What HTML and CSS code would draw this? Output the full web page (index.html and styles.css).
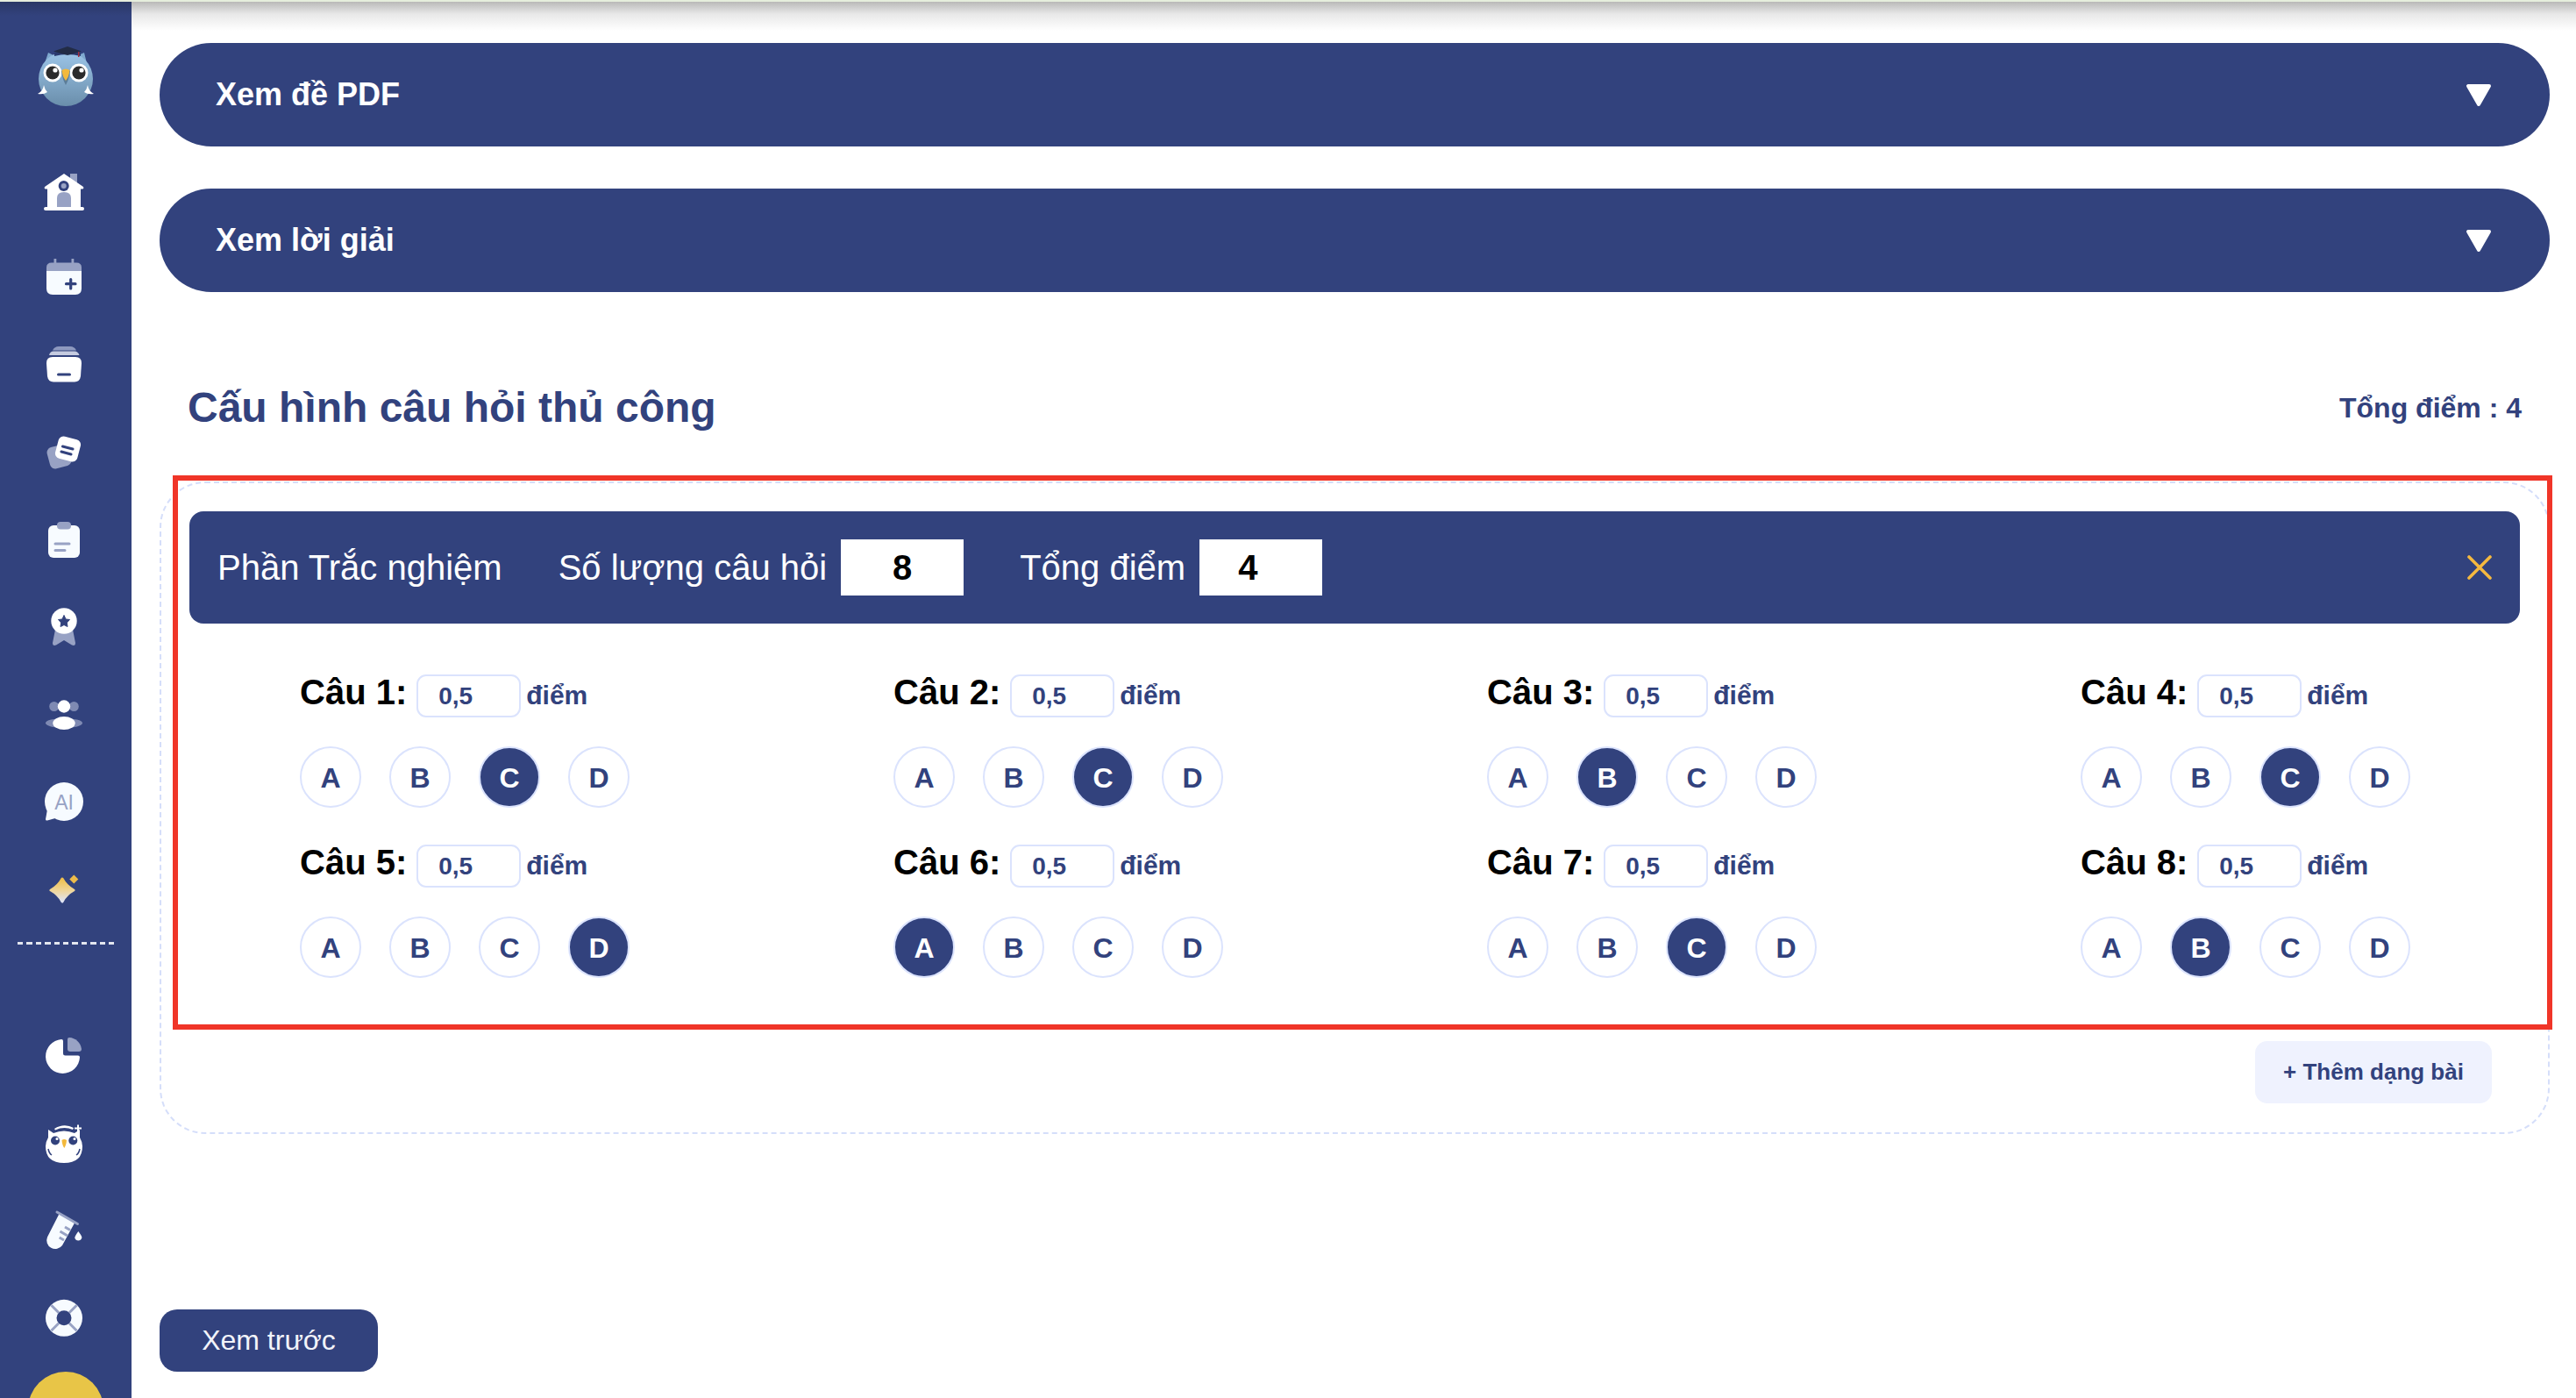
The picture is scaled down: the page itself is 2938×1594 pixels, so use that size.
FILE: index.html
```html
<!DOCTYPE html>
<html lang="vi">
<head>
    <meta charset="UTF-8">
    <title>Cấu hình câu hỏi thủ công</title>
    <link rel="stylesheet" href="styles.css">
</head>
<body>
    <div class="top-strip"></div>
    <div class="page">
        <aside class="sidebar">
            <svg class="logo" width="70" height="80" viewBox="0 0 70 80">
                <defs>
                    <linearGradient id="owlBody" x1="0" y1="0" x2="0" y2="1">
                        <stop offset="0" stop-color="#9cc5e8"/>
                        <stop offset="1" stop-color="#6a8eab"/>
                    </linearGradient>
                </defs>
                <path d="M11 22 L15 10 L23 14 Z M59 22 L56 10 L47 14 Z" fill="#7fa9cf"/>
                <circle cx="35" cy="40" r="31" fill="url(#owlBody)"/>
                <path d="M22 10 Q37 5 52 10 L52 14 Q37 10 22 14 Z" fill="#2a3a6e"/>
                <path d="M37 3 L53 8.500 L37 13 L21 8.500 Z" fill="#222c46"/>
                <rect x="49" y="9" width="1.500" height="6" fill="#a03040"/>
                <circle cx="20" cy="33" r="10.500" fill="#fff"/>
                <circle cx="50" cy="33" r="10.500" fill="#fff"/>
                <circle cx="20" cy="33" r="7.600" fill="#2b2b2b"/>
                <circle cx="50" cy="33" r="7.600" fill="#2b2b2b"/>
                <circle cx="23" cy="30" r="2.600" fill="#fff"/>
                <circle cx="53" cy="30" r="2.600" fill="#fff"/>
                <path d="M30 31 Q35 28 40 31 Q39 40 35 47 Q31 40 30 31 Z" fill="#5c7d98"/>
                <path d="M30.500 30 Q35 27 39.500 30 Q39 37 35 42 Q31 37 30.500 30 Z" fill="#f3b93c"/>
                <path d="M10 47 Q9 54 3 57 Q10 58 14 55 Q11 52 10 47 Z" fill="#fff"/>
                <path d="M60 47 Q61 54 67 57 Q60 58 56 55 Q59 52 60 47 Z" fill="#fff"/>
            </svg>

            <nav class="side-group first">
                <a class="side-item">
                    <svg width="50" height="50" viewBox="0 0 50 50">
                        <rect x="32" y="7" width="8" height="12" fill="#98a2c4"/>
                        <path d="M25 7 L47 22 Q48 24 46 24.500 L44 24.500 V45 H6 V24.500 H4 Q2 24 3 22 Z" fill="#fff"/>
                        <rect x="2" y="45" width="46" height="4" rx="2" fill="#fff"/>
                        <circle cx="24.700" cy="21" r="6" fill="#32427d"/>
                        <circle cx="24.700" cy="21" r="3" fill="#98a2c4"/>
                        <path d="M17 45 V35 Q17 28 25 28 Q33 28 33 35 V45 Z" fill="#98a2c4"/>
                    </svg>
                </a>
                <a class="side-item">
                    <svg width="50" height="50" viewBox="0 0 50 50">
                        <rect x="13.500" y="4" width="2.800" height="8" fill="#98a2c4"/>
                        <rect x="33.500" y="4" width="2.800" height="8" fill="#98a2c4"/>
                        <path d="M5 18 V14 Q5 8.500 11 8.500 H39 Q45 8.500 45 14 V18 Z" fill="#98a2c4"/>
                        <path d="M5 18 H45 V38 Q45 45 38 45 H12 Q5 45 5 38 Z" fill="#f7fbff"/>
                        <path d="M32.700 27.500 V38 M27.500 32.700 H38" stroke="#32427d" stroke-width="3.200" stroke-linecap="round"/>
                    </svg>
                </a>
                <a class="side-item">
                    <svg width="50" height="50" viewBox="0 0 50 50">
                        <path d="M12 8.500 Q14 4 19 4 H32 Q37 4 39 8.500 Z" fill="#8e99bf"/>
                        <path d="M8 14 Q9 9.500 13 9.500 H37 Q41 9.500 42.500 14 Z" fill="#c5cbe0"/>
                        <path d="M5 23 Q5 16 12 16 H38 Q45 16 45 23 L44 38 Q43 44.500 37 44.500 H13 Q7 44.500 6 38 Z" fill="#fff"/>
                        <rect x="17" y="34.500" width="16" height="3" rx="1.500" fill="#32427d"/>
                    </svg>
                </a>
                <a class="side-item">
                    <svg width="50" height="50" viewBox="0 0 50 50">
                        <rect x="7" y="17" width="25" height="25" rx="6" fill="#98a2c4" transform="rotate(-15 19.500 29.500)"/>
                        <rect x="16.500" y="8" width="26" height="26" rx="6" fill="#fff" transform="rotate(15 29.500 21)"/>
                        <path d="M23.500 18 L35 21 M22 24 L33 27" stroke="#32427d" stroke-width="3" stroke-linecap="round"/>
                    </svg>
                </a>
                <a class="side-item">
                    <svg width="50" height="50" viewBox="0 0 50 50">
                        <rect x="7" y="8" width="36" height="37" rx="6" fill="#f7fbff"/>
                        <rect x="17" y="4" width="16" height="8.500" rx="4" fill="#98a2c4"/>
                        <path d="M15 29 H31 M15 36.500 H26" stroke="#98a2c4" stroke-width="3" stroke-linecap="round"/>
                    </svg>
                </a>
                <a class="side-item">
                    <svg width="50" height="50" viewBox="0 0 50 50">
                        <path d="M15 27 L12 42 Q12 46 16 44.500 L25 39 L34 44.500 Q38 46 38 42 L35 27 Z" fill="#98a2c4"/>
                        <circle cx="25" cy="17" r="14.700" fill="#fff"/>
                        <path d="M25 10.500 L27 15 L31.500 15.500 L28.300 19 L29 23.500 L25 21.500 L21 23.500 L21.700 19 L18.500 15.500 L23 15 Z" fill="#32427d" stroke="#32427d" stroke-linejoin="round"/>
                    </svg>
                </a>
                <a class="side-item">
                    <svg width="50" height="50" viewBox="0 0 50 50">
                        <circle cx="13.700" cy="14.500" r="5.500" fill="#7f8ab3"/>
                        <circle cx="36.300" cy="14.500" r="5.500" fill="#7f8ab3"/>
                        <ellipse cx="25" cy="33.500" rx="21" ry="5.500" fill="#7f8ab3"/>
                        <circle cx="25" cy="14.500" r="7.200" fill="#fff"/>
                        <ellipse cx="25" cy="33.500" rx="12.700" ry="7.500" fill="#fff"/>
                    </svg>
                </a>
                <a class="side-item">
                    <svg width="50" height="50" viewBox="0 0 50 50">
                        <circle cx="25" cy="23" r="22" fill="#f7fbff"/>
                        <path d="M6 32 L4 43 Q4 45 6 44.500 L15 42 Z" fill="#f7fbff"/>
                        <text class="ai-text" x="25" y="31.500" text-anchor="middle">AI</text>
                    </svg>
                </a>
                <a class="side-item">
                    <svg width="50" height="50" viewBox="0 0 50 50">
                        <defs>
                            <linearGradient id="sparkFill" x1="0" y1="0" x2="0" y2="1">
                                <stop offset="0" stop-color="#efbf4c"/>
                                <stop offset="0.500" stop-color="#f0d596"/>
                                <stop offset="1" stop-color="#dfe4f6"/>
                            </linearGradient>
                        </defs>
                        <path d="M23 11 Q27.500 19.500 36 24 Q27.500 28.500 23 37 Q18.500 28.500 10 24 Q18.500 19.500 23 11 Z" fill="url(#sparkFill)" stroke="url(#sparkFill)" stroke-width="3" stroke-linejoin="round"/>
                        <path d="M36.300 6.500 L41.300 11.500 L36.300 16.500 L31.300 11.500 Z" fill="#edbb4a"/>
                    </svg>
                </a>
            </nav>

            <div class="side-divider"></div>

            <nav class="side-group">
                <a class="side-item">
                    <svg width="50" height="50" viewBox="0 0 50 50">
                        <path d="M24 8 V22 Q24 24.500 26.500 24.500 H41 Q43 24.500 43 26.500 A19.500 19.500 0 1 1 22 6 Q24 6 24 8 Z" fill="#fff"/>
                        <path d="M29 6 Q29 4 31 4 A15 15 0 0 1 45 17 Q45 20 42 20 H32 Q29 20 29 17 Z" fill="#98a2c4"/>
                    </svg>
                </a>
                <a class="side-item">
                    <svg width="50" height="50" viewBox="0 0 50 50">
                        <path d="M7 18 L7 9 L13 13 Q25 8 37 13 L43 9 L43 18 Q46 23 46 28 Q46 47 25 47 Q4 47 4 28 Q4 23 7 18 Z" fill="#fff"/>
                        <path d="M14 8 Q25 1 36 7 L35 9 Q25 5 15 9.500 Z" fill="#fff"/>
                        <circle cx="15" cy="21.500" r="5" fill="#32427d"/>
                        <circle cx="35.300" cy="21.500" r="5" fill="#32427d"/>
                        <circle cx="17" cy="19.500" r="1.500" fill="#fff"/>
                        <circle cx="37" cy="19.500" r="1.500" fill="#fff"/>
                        <path d="M22.500 21 Q25 19 28 21 Q27.500 27 25.300 30 Q23 27 22.500 21 Z" fill="#f3b93c"/>
                        <path d="M7 31 Q8 36 11 38 M43 31 Q42 36 39 38" stroke="#32427d" stroke-width="1.500" fill="none"/>
                        <path d="M41 3.500 V11.500 M37 7.500 H45" stroke="#fff" stroke-width="2"/>
                    </svg>
                </a>
                <a class="side-item">
                    <svg width="50" height="50" viewBox="0 0 50 50">
                        <path d="M19.500 5 L37 15.500 L23 41 A9.800 9.800 0 0 1 6 31.500 Z" fill="#f7fbff"/>
                        <path d="M17 3 L40.500 16.500" stroke="#98a2c4" stroke-width="3" stroke-linecap="round"/>
                        <path d="M26 20 L32 23.500 M20.500 25 L29 30 M19.700 32 L25 35" stroke="#98a2c4" stroke-width="3"/>
                        <path d="M41.300 25 Q46 31 45.300 32.500 A4.200 4.200 0 0 1 37.300 32.500 Q37 31 41.300 25 Z" fill="#f7fbff"/>
                    </svg>
                </a>
                <a class="side-item">
                    <svg width="50" height="50" viewBox="0 0 50 50">
                        <circle cx="25" cy="23.800" r="21" fill="#f7fbff"/>
                        <path d="M10.500 9.300 L19 17.800 M39.500 9.300 L31 17.800 M10.500 38.300 L19 29.800 M39.500 38.300 L31 29.800" stroke="#98a2c4" stroke-width="3"/>
                        <circle cx="25" cy="23.800" r="8.500" fill="#32427d"/>
                    </svg>
                </a>
            </nav>

            <div class="avatar"></div>
        </aside>

        <main class="content">
            <div class="collapse-bar">
                <span>Xem đề PDF</span>
                <svg width="30" height="27" viewBox="0 0 30 27"><path d="M3 3 H27 L15 24 Z" fill="#fff" stroke="#fff" stroke-width="4" stroke-linejoin="round"/></svg>
            </div>
            <div class="collapse-bar">
                <span>Xem lời giải</span>
                <svg width="30" height="27" viewBox="0 0 30 27"><path d="M3 3 H27 L15 24 Z" fill="#fff" stroke="#fff" stroke-width="4" stroke-linejoin="round"/></svg>
            </div>

            <div class="section-head">
                <h1>Cấu hình câu hỏi thủ công</h1>
                <span class="total">Tổng điểm : 4</span>
            </div>

            <section class="config-box">
                <div class="part-head">
                    <span class="part-title">Phần Trắc nghiệm</span>
                    <span class="part-label count-label">Số lượng câu hỏi</span>
                    <span class="part-field">8</span>
                    <span class="part-label score-label">Tổng điểm</span>
                    <span class="part-field score-field">4</span>
                    <svg class="part-close" width="28" height="28" viewBox="0 0 28 28"><path d="M2 2 L26 26 M26 2 L2 26" stroke="#f5b93f" stroke-width="3.600" stroke-linecap="round"/></svg>
                </div>

                <div class="question-grid">
                    <div class="question">
                        <div class="question-top"><span class="question-name">Câu 1:</span><span class="point-field">0,5</span><span class="point-unit">điểm</span></div>
                        <div class="options"><span class="option">A</span><span class="option">B</span><span class="option active">C</span><span class="option">D</span></div>
                    </div>
                    <div class="question">
                        <div class="question-top"><span class="question-name">Câu 2:</span><span class="point-field">0,5</span><span class="point-unit">điểm</span></div>
                        <div class="options"><span class="option">A</span><span class="option">B</span><span class="option active">C</span><span class="option">D</span></div>
                    </div>
                    <div class="question">
                        <div class="question-top"><span class="question-name">Câu 3:</span><span class="point-field">0,5</span><span class="point-unit">điểm</span></div>
                        <div class="options"><span class="option">A</span><span class="option active">B</span><span class="option">C</span><span class="option">D</span></div>
                    </div>
                    <div class="question">
                        <div class="question-top"><span class="question-name">Câu 4:</span><span class="point-field">0,5</span><span class="point-unit">điểm</span></div>
                        <div class="options"><span class="option">A</span><span class="option">B</span><span class="option active">C</span><span class="option">D</span></div>
                    </div>
                    <div class="question">
                        <div class="question-top"><span class="question-name">Câu 5:</span><span class="point-field">0,5</span><span class="point-unit">điểm</span></div>
                        <div class="options"><span class="option">A</span><span class="option">B</span><span class="option">C</span><span class="option active">D</span></div>
                    </div>
                    <div class="question">
                        <div class="question-top"><span class="question-name">Câu 6:</span><span class="point-field">0,5</span><span class="point-unit">điểm</span></div>
                        <div class="options"><span class="option active">A</span><span class="option">B</span><span class="option">C</span><span class="option">D</span></div>
                    </div>
                    <div class="question">
                        <div class="question-top"><span class="question-name">Câu 7:</span><span class="point-field">0,5</span><span class="point-unit">điểm</span></div>
                        <div class="options"><span class="option">A</span><span class="option">B</span><span class="option active">C</span><span class="option">D</span></div>
                    </div>
                    <div class="question">
                        <div class="question-top"><span class="question-name">Câu 8:</span><span class="point-field">0,5</span><span class="point-unit">điểm</span></div>
                        <div class="options"><span class="option">A</span><span class="option active">B</span><span class="option">C</span><span class="option">D</span></div>
                    </div>
                </div>

                <div class="box-actions">
                    <button class="add-btn">+ Thêm dạng bài</button>
                </div>
            </section>

            <button class="preview-btn">Xem trước</button>
        </main>
    </div>

    <div class="highlight-frame"></div>
</body>
</html>
```

FILE: styles.css
```css
* {
    box-sizing: border-box;
}
html, body {
    margin: 0;
    height: 100%;
}
body {
    font-family: 'Liberation Sans', Arial, sans-serif;
    background-color: #fff;
    color: #32427d;
    overflow: hidden;
    position: relative;
}
.top-strip {
    height: 2px;
    background-color: #e6eedd;
}
.page {
    display: flex;
    height: 1592px;
}

/* sidebar */
.sidebar {
    width: 150px;
    flex: none;
    display: flex;
    flex-direction: column;
    align-items: center;
    overflow: hidden;
    background: linear-gradient(#2a3866, #32427d 16px);
}
.logo {
    margin-top: 48px;
    flex: none;
}
.side-group {
    align-self: flex-start;
    width: 146px;
    margin-top: 77px;
    flex: none;
}
.side-group.first {
    margin-top: 36px;
}
.side-item {
    display: flex;
    height: 100px;
    align-items: center;
    justify-content: center;
}
.ai-text {
    font-family: 'Liberation Sans', Arial, sans-serif;
    font-size: 23px;
    fill: #98a2c4;
}
.side-divider {
    width: 110px;
    height: 3px;
    margin-top: 8px;
    flex: none;
    background: repeating-linear-gradient(90deg, #e3e6ef 0, #e3e6ef 6.300px, transparent 6.300px, transparent 10.400px);
}
.avatar {
    width: 86px;
    height: 86px;
    margin-top: 10px;
    flex: none;
    border-radius: 50%;
    background-color: #e8c547;
}

/* main */
.content {
    flex: 1;
    padding: 47px 30px 0 32px;
    background: linear-gradient(#b9b9b8, #e8e8e8 14px, #fff 33px);
}
.collapse-bar {
    height: 118px;
    margin-bottom: 48px;
    padding: 0 66px 0 64px;
    display: flex;
    align-items: center;
    justify-content: space-between;
    border-radius: 59px;
    background-color: #32427d;
    color: #fff;
    font-size: 36px;
    font-weight: bold;
}
.section-head {
    margin-top: 104px;
    padding: 0 32px;
    display: flex;
    align-items: center;
    justify-content: space-between;
}
.section-head h1 {
    margin: 0;
    font-size: 48px;
    line-height: 56px;
}
.total {
    font-size: 32px;
    font-weight: bold;
}

.config-box {
    margin-top: 56px;
    padding: 32px 32px 33px;
    border: 2px dashed #d5defa;
    border-radius: 52px;
}
.part-head {
    height: 128px;
    padding: 0 32px;
    display: flex;
    align-items: center;
    border-radius: 16px;
    background-color: #32427d;
    color: #fff;
    font-size: 40px;
}
.count-label {
    margin-left: 64px;
}
.part-field {
    width: 140px;
    height: 64px;
    margin-left: 16px;
    display: flex;
    align-items: center;
    justify-content: center;
    background-color: #fff;
    color: #000;
    font-weight: bold;
}
.score-label {
    margin-left: 64px;
}
.score-field {
    justify-content: flex-start;
    padding-left: 44px;
}
.part-close {
    margin-left: auto;
}

.question-grid {
    padding: 58px 0 0 126px;
    display: grid;
    grid-template-columns: repeat(4, 400px);
    column-gap: 277px;
    row-gap: 42px;
}
.question-top {
    display: flex;
    align-items: baseline;
}
.question-name {
    color: #000;
    font-size: 40px;
    font-weight: bold;
    line-height: 40px;
}
.point-field {
    width: 119px;
    height: 49px;
    margin-left: 11px;
    padding-left: 23px;
    border: 2px solid #dbe3fd;
    border-radius: 11px;
    font-size: 28px;
    font-weight: bold;
    line-height: 45px;
}
.point-unit {
    margin-left: 6px;
    font-size: 30px;
    font-weight: bold;
}
.options {
    margin-top: 33px;
    display: flex;
    gap: 32px;
}
.option {
    width: 70px;
    height: 70px;
    padding-top: 2px;
    display: flex;
    align-items: center;
    justify-content: center;
    border: 2px solid #dbe3fd;
    border-radius: 50%;
    font-size: 32px;
    font-weight: bold;
}
.option.active {
    background-color: #32427d;
    color: #fff;
}

.box-actions {
    margin-top: 72px;
    padding-right: 32px;
    display: flex;
    justify-content: flex-end;
}
.add-btn {
    width: 270px;
    height: 71px;
    padding: 0;
    border: none;
    border-radius: 14px;
    background-color: #eff2fe;
    color: #32427d;
    font-family: inherit;
    font-size: 26px;
    font-weight: bold;
}
.preview-btn {
    display: block;
    width: 249px;
    height: 71px;
    margin-top: 200px;
    padding: 0;
    border: none;
    border-radius: 20px;
    background-color: #32427d;
    color: #f2f4fa;
    font-family: inherit;
    font-size: 32px;
}

/* red annotation drawn over the page */
.highlight-frame {
    position: absolute;
    left: 197px;
    top: 542px;
    width: 2714px;
    height: 632px;
    border: 6px solid #f03528;
    pointer-events: none;
}
```
